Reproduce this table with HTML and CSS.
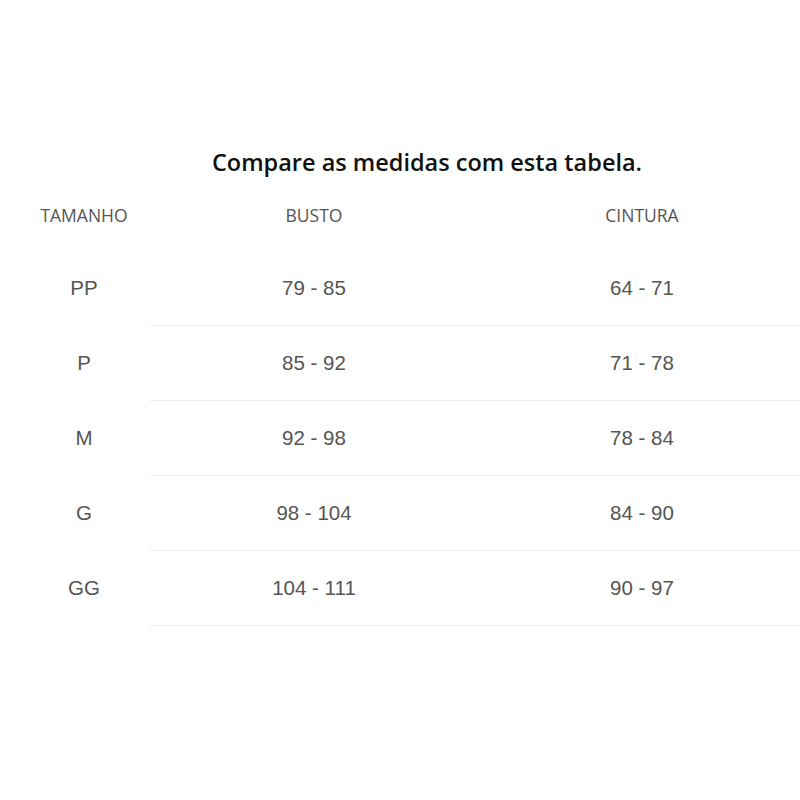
FILE: index.html
```html
<!DOCTYPE html>
<html lang="pt">
<head>
<meta charset="utf-8">
<title>Tabela de medidas</title>
<link rel="stylesheet" href="styles.css">
</head>
<body>
<main class="page">
  <h1 class="title">Compare as medidas com esta tabela.</h1>
  <div class="table">
    <div class="row head">
      <div class="cell size">TAMANHO</div>
      <div class="cell">BUSTO</div>
      <div class="cell">CINTURA</div>
    </div>
    <div class="row">
      <div class="cell size">PP</div>
      <div class="cell">79 - 85</div>
      <div class="cell">64 - 71</div>
    </div>
    <div class="row">
      <div class="cell size">P</div>
      <div class="cell">85 - 92</div>
      <div class="cell">71 - 78</div>
    </div>
    <div class="row">
      <div class="cell size">M</div>
      <div class="cell">92 - 98</div>
      <div class="cell">78 - 84</div>
    </div>
    <div class="row">
      <div class="cell size">G</div>
      <div class="cell">98 - 104</div>
      <div class="cell">84 - 90</div>
    </div>
    <div class="row">
      <div class="cell size">GG</div>
      <div class="cell">104 - 111</div>
      <div class="cell">90 - 97</div>
    </div>
  </div>
</main>
</body>
</html>
```
FILE: styles.css
```css
html, body {
  margin: 0;
  padding: 0;
  background: #ffffff;
}
.page {
  padding-top: 145px;
  width: 800px;
  overflow: hidden;
}
.title {
  margin: 0;
  padding-left: 54px;
  text-align: center;
  font-family: "Open Sans", sans-serif;
  font-weight: 600;
  font-size: 23.5px;
  line-height: 34px;
  color: #111111;
}
.table {
  display: flex;
  flex-direction: column;
}
.row {
  display: grid;
  grid-template-columns: 150px 328px 328px;
  height: 75px;
}
.head {
  height: 72px;
}
.cell {
  display: flex;
  align-items: center;
  justify-content: center;
  font-family: "Liberation Sans", Arial, sans-serif;
  font-size: 20.5px;
  color: #555555;
  border-bottom: 1px solid #ececec;
}
.size {
  padding-left: 18px;
  border-bottom-color: transparent;
}
.head .cell {
  font-family: "Open Sans", sans-serif;
  font-size: 17.5px;
  color: #555555;
  border-bottom-color: transparent;
}
```
